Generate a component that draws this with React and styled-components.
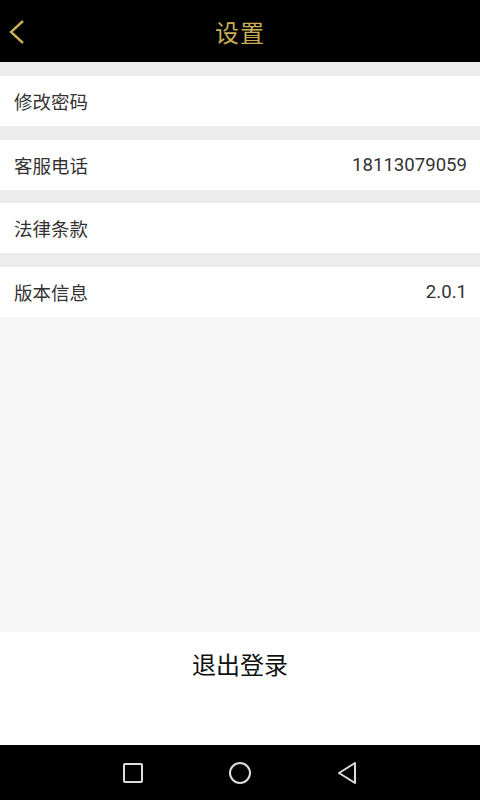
import React from "react";
import styled, { createGlobalStyle } from "styled-components";

const Global = createGlobalStyle`
  html, body { margin: 0; padding: 0; }
  body { font-family: Roboto, "Noto Sans CJK SC", sans-serif; }
  #root { height: 800px; }
`;

const Screen = styled.div`
  width: 480px;
  height: 800px;
  display: flex;
  flex-direction: column;
  background: #f6f6f6;
  overflow: hidden;
`;

const Header = styled.header`
  height: 62px;
  flex: none;
  background: #000;
  display: flex;
  align-items: center;
  justify-content: center;
  position: relative;
`;

const BackBtn = styled.div`
  position: absolute;
  left: 6px;
  top: 18px;
  width: 22px;
  height: 28px;
`;

const Title = styled.h1`
  margin: 0;
  font-family: "Noto Sans CJK SC", sans-serif;
  font-weight: 400;
  font-size: 24px;
  color: #c9ad55;
  letter-spacing: 1px;
`;

const List = styled.div`
  display: flex;
  flex-direction: column;
  background: #ececec;
  padding-top: 14px;
  gap: 13.5px;
`;

const Row = styled.div`
  height: 50px;
  background: #fff;
  display: flex;
  align-items: center;
  justify-content: space-between;
  padding: 0 13px 0 14px;
`;

const Label = styled.span`
  font-family: "Noto Sans CJK SC", sans-serif;
  font-size: 18.5px;
  color: #333;
`;

const Value = styled.span`
  font-family: Roboto, sans-serif;
  font-size: 18.6px;
  color: #333;
`;

const Spacer = styled.div`
  flex: 1;
  background: #f6f6f6;
`;

const Logout = styled.div`
  height: 113px;
  flex: none;
  background: #fff;
  display: flex;
  justify-content: center;
  padding-top: 16px;
  box-sizing: border-box;
`;

const LogoutText = styled.span`
  font-family: "Noto Sans CJK SC", sans-serif;
  font-size: 24px;
  color: #111;
  line-height: 32px;
`;

const NavBar = styled.nav`
  height: 55px;
  flex: none;
  background: #000;
  display: flex;
  align-items: center;
  justify-content: center;
  gap: 83px;
`;

const NavIcon = styled.svg`
  width: 24px;
  height: 24px;
  display: block;
`;

const rows = [
  { label: "修改密码" },
  { label: "客服电话", value: "18113079059" },
  { label: "法律条款" },
  { label: "版本信息", value: "2.0.1" },
];

export default function App() {
  return (
    <Screen>
      <Global />
      <Header>
        <BackBtn>
          <svg width="22" height="28" viewBox="0 0 22 28">
            <polyline points="17,3 5,14 17,25" fill="none" stroke="#c9ad55" strokeWidth="2.4" strokeLinecap="butt" strokeLinejoin="miter" />
          </svg>
        </BackBtn>
        <Title>设置</Title>
      </Header>
      <List>
        {rows.map((r) => (
          <Row key={r.label}>
            <Label>{r.label}</Label>
            {r.value && <Value>{r.value}</Value>}
          </Row>
        ))}
      </List>
      <Spacer />
      <Logout>
        <LogoutText>退出登录</LogoutText>
      </Logout>
      <NavBar>
        <NavIcon viewBox="0 0 24 24">
          <rect x="3" y="3" width="18" height="18" rx="1" fill="none" stroke="#ddd" strokeWidth="2" />
        </NavIcon>
        <NavIcon viewBox="0 0 24 24">
          <circle cx="12" cy="12" r="10" fill="none" stroke="#ddd" strokeWidth="2" />
        </NavIcon>
        <NavIcon viewBox="0 0 24 24">
          <polygon points="20,2 20,22 4,12" fill="none" stroke="#ddd" strokeWidth="2" strokeLinejoin="round" />
        </NavIcon>
      </NavBar>
    </Screen>
  );
}
